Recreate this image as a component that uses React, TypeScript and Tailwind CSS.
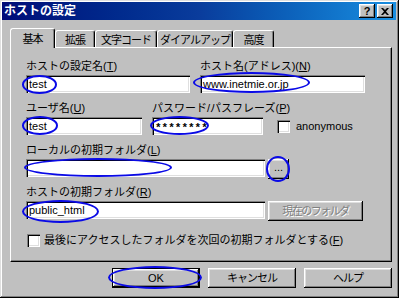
import React from 'react';

const raised =
  'shadow-[inset_-1px_-1px_#000,inset_1px_1px_#fff,inset_-2px_-2px_#808080,inset_2px_2px_#dfdfdf]';
const sunken =
  'shadow-[inset_1px_1px_#808080,inset_2px_2px_#000,inset_-1px_-1px_#fff,inset_-2px_-2px_#dfdfdf]';

const Label: React.FC<{ children: React.ReactNode }> = ({ children }) => (
  <div className="h-[14px] leading-[14px] text-[11px] whitespace-nowrap">{children}</div>
);

const Field: React.FC<{ w: string; children?: React.ReactNode }> = ({ w, children }) => (
  <div className={`${w} h-[18px] bg-white ${sunken} pl-[3px] text-[11px] leading-[18px] whitespace-nowrap overflow-hidden`}>
    {children}
  </div>
);

const CheckBox = () => <div className={`w-[13px] h-[13px] shrink-0 bg-white ${sunken}`} />;

const Ellipse: React.FC<{ cls: string }> = ({ cls }) => (
  <div className={`absolute border-2 border-[#0a0ae6] rounded-[50%] pointer-events-none ${cls}`} />
);

const tabs = [
  { label: '基本', w: 'w-[45px]', active: true },
  { label: '拡張', w: 'w-[40px]', active: false },
  { label: '文字コード', w: 'w-[62px]', active: false },
  { label: 'ダイアルアップ', w: 'w-[76px]', active: false },
  { label: '高度', w: 'w-[41px]', active: false },
];

export default function App() {
  return (
    <div
      className="relative w-[399px] h-[298px] bg-[#c0c0c0] flex flex-col pt-[2px] pl-[2px] pr-[3px] text-black shadow-[inset_-1px_-1px_#000,inset_1px_1px_#dfdfdf,inset_-2px_-2px_#808080,inset_2px_2px_#fff] overflow-hidden"
      style={{ fontFamily: '"Liberation Sans", "Noto Sans CJK JP", sans-serif' }}
    >
      {/* title bar */}
      <div className="h-[18px] flex items-center bg-linear-to-r from-[#000a78] via-[#0a3c9c] to-[#1a8ee0] pl-[2px] pr-[3px]">
        <span className="text-white font-bold text-[12px] leading-[14px]">ホストの設定</span>
        <div className="ml-auto flex gap-[2px]">
          <div className={`w-[16px] h-[14px] bg-[#c0c0c0] ${raised} flex items-center justify-center text-[11px] font-bold leading-none`}>
            ?
          </div>
          <div className={`w-[16px] h-[14px] bg-[#c0c0c0] ${raised} flex items-center justify-center`}>
            <svg width="8" height="7" viewBox="0 0 8 7">
              <path d="M0 0h2l2 2 2-2h2L5 3.5 8 7H6L4 5 2 7H0l3-3.5z" fill="#000" />
            </svg>
          </div>
        </div>
      </div>

      <div className="flex flex-col pl-[8px] pr-[4px] pt-[8px]">
        {/* tabs */}
        <div className="relative z-10 h-[20px] -mb-[1px] flex items-end">
          {tabs.map((t) => (
            <div
              key={t.label}
              className={`${t.w} ${
                t.active ? 'h-[20px] pt-[3px]' : 'h-[17px] mb-[1px] pt-[2px]'
              } bg-[#c0c0c0] border-t border-l border-white border-r border-r-black rounded-t-[3px] shadow-[inset_-1px_0_#808080] text-[11px] leading-[14px] text-center whitespace-nowrap tracking-[-1px]`}
            >
              {t.label}
            </div>
          ))}
        </div>

        {/* panel */}
        <div className="h-[215px] border border-t-white border-l-white border-r-black border-b-black shadow-[inset_-1px_-1px_#808080] pl-[15px] pt-[11px] flex flex-col">
          <div className="flex gap-[10px]">
            <div className="flex flex-col gap-[2px]">
              <Label>
                ホストの設定名(<u>T</u>)
              </Label>
              <Field w="w-[164px]">test</Field>
            </div>
            <div className="flex flex-col gap-[2px]">
              <Label>
                ホスト名(アドレス)(<u>N</u>)
              </Label>
              <Field w="w-[165px]">www.inetmie.or.jp</Field>
            </div>
          </div>

          <div className="flex items-end mt-[8px]">
            <div className="w-[116px] flex flex-col gap-[2px]">
              <Label>
                ユーザ名(<u>U</u>)
              </Label>
              <Field w="w-[116px]">test</Field>
            </div>
            <div className="w-[111px] flex flex-col gap-[2px] ml-[10px]">
              <Label>
                パスワード/パスフレーズ(<u>P</u>)
              </Label>
              <Field w="w-[111px]">
                <span
                  className="inline-block align-top h-[18px] pt-[4px] leading-[14px] font-bold text-[11px]"
                  style={{ fontFamily: '"Liberation Mono", monospace' }}
                >
                  ********
                </span>
              </Field>
            </div>
            <div className="flex items-center gap-[6px] ml-[14px] mb-[2px]">
              <CheckBox />
              <span className="text-[11px] leading-[14px]">anonymous</span>
            </div>
          </div>

          <div className="mt-[8px] flex flex-col gap-[2px]">
            <Label>
              ローカルの初期フォルダ(<u>L</u>)
            </Label>
            <div className="flex items-start gap-[3px]">
              <Field w="w-[239px]" />
              <div className={`w-[21px] h-[20px] bg-[#c0c0c0] ${raised} text-[11px] leading-[16px] text-center`}>
                ...
              </div>
            </div>
          </div>

          <div className="mt-[6px] flex flex-col gap-[2px]">
            <Label>
              ホストの初期フォルダ(<u>R</u>)
            </Label>
            <div className="flex items-start gap-[3px]">
              <Field w="w-[239px]">public_html</Field>
              <div
                className={`w-[95px] h-[20px] bg-[#c0c0c0] ${raised} text-[11px] leading-[20px] text-center tracking-[-1.5px] text-[#808080] [text-shadow:1px_1px_0_#fff]`}
              >
                現在のフォルダ
              </div>
            </div>
          </div>

          <div className="mt-[12px] flex items-center gap-[4px] pl-[1px]">
            <CheckBox />
            <span className="text-[11px] leading-[14px] whitespace-nowrap">
              最後にアクセスしたフォルダを次回の初期フォルダとする(<u>F</u>)
            </span>
          </div>
        </div>

        {/* dialog buttons */}
        <div className="mt-[6px] flex justify-end gap-[8px]">
          <div className="w-[88px] h-[20px] border border-black bg-[#c0c0c0]">
            <div className={`h-full ${raised} text-[11px] leading-[18px] text-center`}>OK</div>
          </div>
          <div className={`w-[88px] h-[20px] bg-[#c0c0c0] ${raised} text-[11px] leading-[20px] text-center tracking-[-1px]`}>
            キャンセル
          </div>
          <div className={`w-[88px] h-[20px] bg-[#c0c0c0] ${raised} text-[11px] leading-[20px] text-center tracking-[-1px]`}>
            ヘルプ
          </div>
        </div>
      </div>

      {/* hand-drawn annotation circles */}
      <Ellipse cls="left-[22px] top-[75px] w-[35px] h-[19px]" />
      <Ellipse cls="left-[193px] top-[72px] w-[117px] h-[21px]" />
      <Ellipse cls="left-[22px] top-[116px] w-[36px] h-[19px]" />
      <Ellipse cls="left-[150px] top-[116px] w-[59px] h-[19px]" />
      <Ellipse cls="left-[24px] top-[158px] w-[148px] h-[19px]" />
      <Ellipse cls="left-[266px] top-[156px] w-[24px] h-[26px]" />
      <Ellipse cls="left-[22px] top-[200px] w-[77px] h-[23px]" />
      <Ellipse cls="left-[108px] top-[266px] w-[94px] h-[23px]" />
    </div>
  );
}
